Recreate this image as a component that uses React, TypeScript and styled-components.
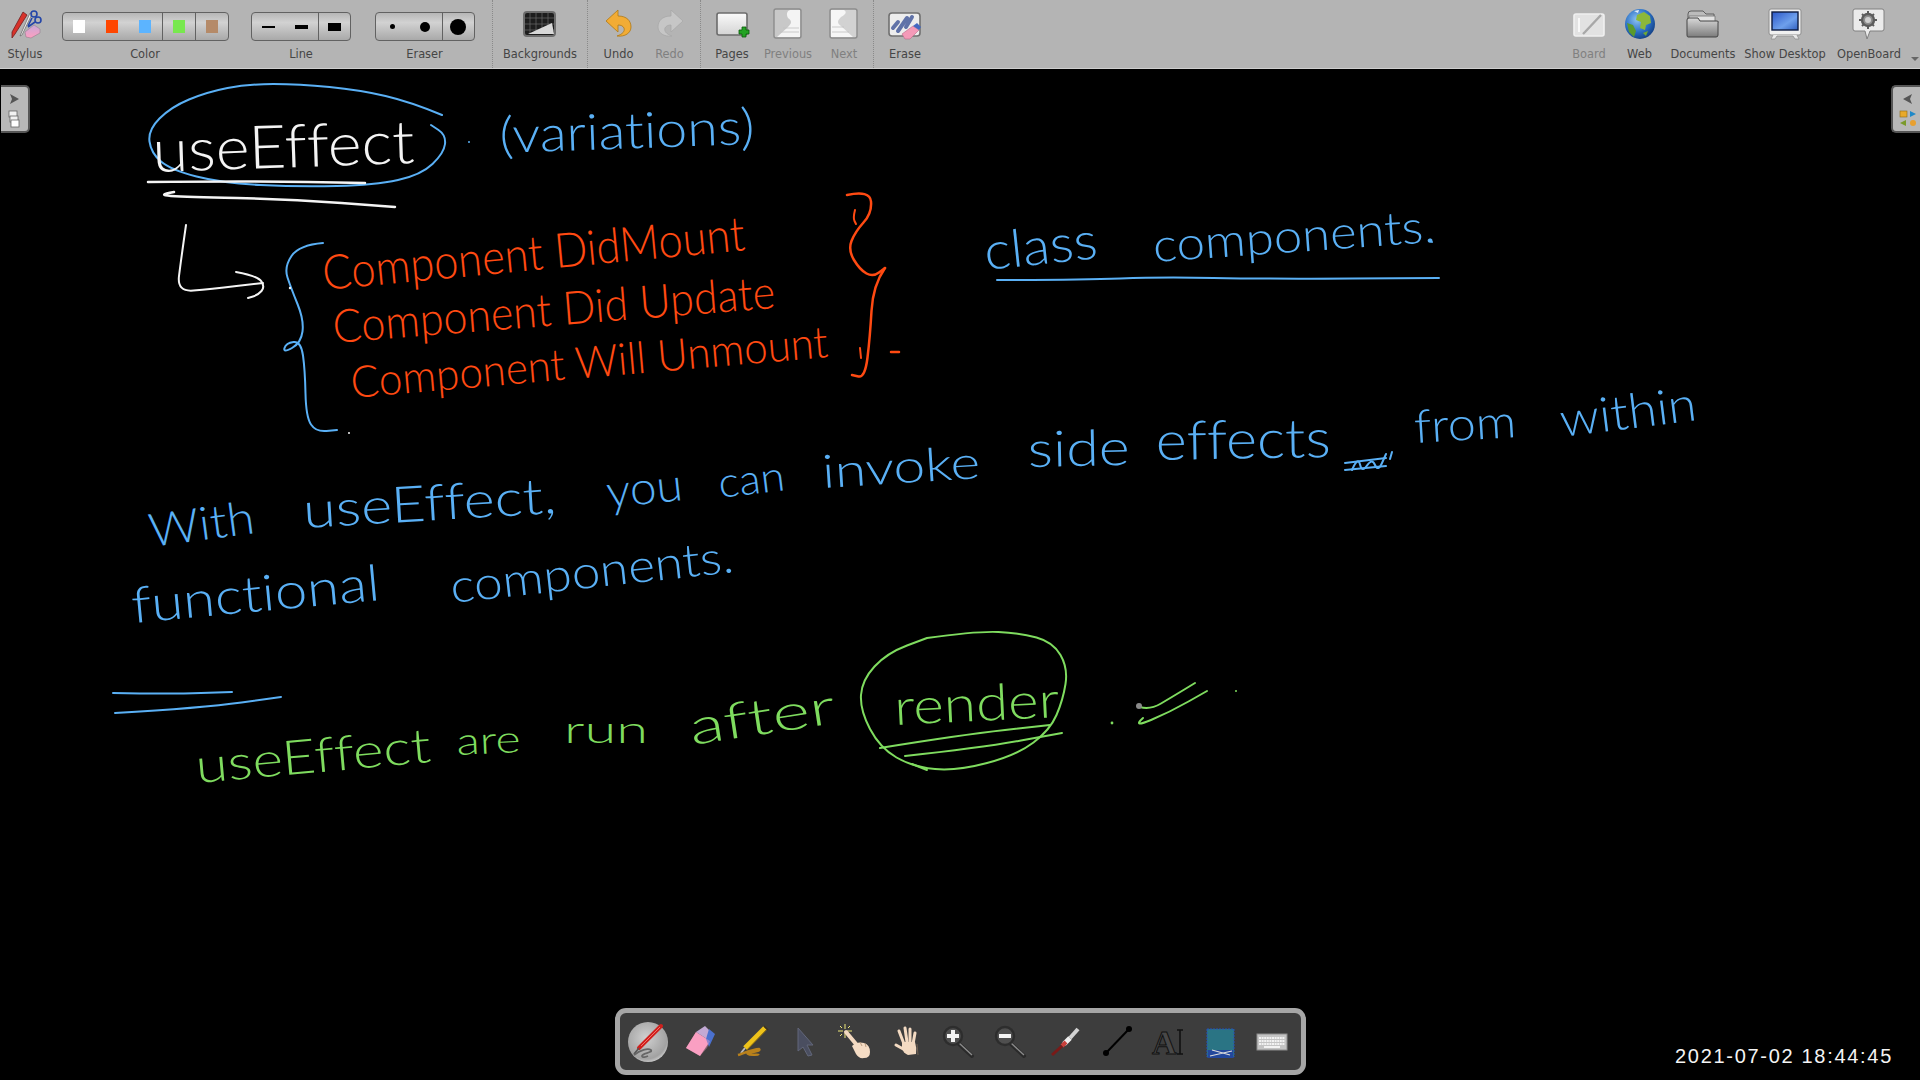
import React from "react"
import styled, { createGlobalStyle } from "styled-components"

const Colors = {
  bar: "#b4b4b4",
  label: "#454545",
  labelOff: "#808080",
  blue: "#5ab0f5",
  orange: "#ff4a12",
  green: "#7fdc5f",
  white: "#f4f4f4",
}

const GlobalStyle = createGlobalStyle`
  html, body {
    margin: 0;
    padding: 0;
    background: #000;
  }
  #root {
    width: 1920px;
    height: 1080px;
    overflow: hidden;
  }
`

const Page = styled.div`
  display: flex;
  flex-direction: column;
  width: 1920px;
  height: 1080px;
  background: #000;
  font-family: "DejaVu Sans", sans-serif;
`

const Toolbar = styled.header`
  display: flex;
  flex: none;
  height: 68px;
  background: ${Colors.bar};
  border-bottom: 1px solid #cfcfcf;
`

const ToolItem = styled.div<{ $width: number }>`
  display: flex;
  flex: none;
  flex-direction: column;
  align-items: center;
  width: ${p => p.$width}px;
`

const IconSlot = styled.div`
  display: flex;
  align-items: center;
  justify-content: center;
  height: 46px;
`

const ToolLabel = styled.span<{ $off?: boolean }>`
  font-size: 11.4px;
  line-height: 16px;
  white-space: nowrap;
  color: ${p => (p.$off ? Colors.labelOff : Colors.label)};
`

const DottedSep = styled.div<{ $before?: number }>`
  flex: none;
  width: 0;
  margin-left: ${p => p.$before || 0}px;
  border-left: 1px dotted #8a8a8a;
`

const Section = styled.div<{ $width: number; $left?: number }>`
  display: flex;
  flex: none;
  width: ${p => p.$width}px;
  padding-left: ${p => p.$left || 0}px;
  box-sizing: border-box;
`

const Spacer = styled.div`
  flex: 1;
`

const MenuArrow = styled.div`
  flex: none;
  align-self: flex-end;
  width: 0;
  height: 0;
  margin: 0 1px 7px 2px;
  border-left: 4px solid transparent;
  border-right: 4px solid transparent;
  border-top: 4px solid #666;
`

const SegmentGroup = styled.div`
  display: flex;
  height: 29px;
  margin-top: 7px;
  border: 1px solid #626262;
  border-radius: 4px;
  box-sizing: border-box;
  background: linear-gradient(#b6b6b6 0%, #d2d2d2 35%, #bcbcbc 70%, #a9a9a9 100%);
`

const Segment = styled.div<{ $width: number; $divided?: boolean }>`
  display: flex;
  align-items: center;
  justify-content: center;
  width: ${p => p.$width}px;
  box-sizing: border-box;
  border-left: ${p => (p.$divided ? "1px solid #626262" : "none")};
`

const Swatch = styled.div<{ $color: string }>`
  width: 12px;
  height: 13px;
  background: ${p => p.$color};
`

const LineSample = styled.div<{ $height: number }>`
  width: 13px;
  height: ${p => p.$height}px;
  background: #000;
`

const EraserDot = styled.div<{ $size: number; $tall?: number }>`
  width: ${p => p.$size}px;
  height: ${p => p.$tall || p.$size}px;
  border-radius: 50%;
  background: #000;
`

const Board = styled.main`
  position: relative;
  flex: 1;
`

const InkLayer = styled.svg`
  position: absolute;
  inset: 0;
  width: 1920px;
  height: 1011px;
`

const InkStroke = styled.path<{ $color: string; $weight?: number }>`
  fill: none;
  stroke: ${p => p.$color};
  stroke-width: ${p => p.$weight || 2};
  stroke-linecap: round;
  stroke-linejoin: round;
`

const InkWord = styled.text<{ $color: string }>`
  font-family: "Lato", "Open Sans", sans-serif;
  font-weight: 300;
  font-variant-ligatures: none;
  fill: ${p => p.$color};
`

const SideTab = styled.div<{ $side: "left" | "right" }>`
  position: absolute;
  top: 16px;
  ${p => p.$side}: ${p => (p.$side === "left" ? 1 : 0)}px;
  display: flex;
  align-items: center;
  justify-content: center;
  width: 29px;
  height: 48px;
  box-sizing: border-box;
  background: #b8b8b8;
  border: 2px solid #565656;
  border-${p => p.$side}: none;
  border-radius: ${p => (p.$side === "left" ? "0 5px 5px 0" : "5px 0 0 5px")};
`

const Dock = styled.nav`
  position: absolute;
  left: 615px;
  bottom: 5px;
  display: flex;
  align-items: center;
  width: 691px;
  height: 67px;
  padding-left: 2px;
  box-sizing: border-box;
  background: #3d3d3d;
  border: 5px solid #a6a6a6;
  border-radius: 11px;
`

const DockButton = styled.div`
  display: flex;
  flex: none;
  align-items: center;
  justify-content: center;
  width: 52px;
`

const Timestamp = styled.time`
  position: absolute;
  right: 27px;
  bottom: 13px;
  font-family: "Liberation Sans", sans-serif;
  font-size: 20px;
  line-height: 22px;
  letter-spacing: 1.7px;
  white-space: pre;
  color: #f4f4f4;
`

type Pt = [number, number]

// midpoint smoothing, keeps the hand drawn look without a lot of control points
const smooth = (pts: Pt[]) => {
  let d = `M${pts[0][0]} ${pts[0][1]}`
  for (let i = 1; i < pts.length - 1; i++) {
    const mx = (pts[i][0] + pts[i + 1][0]) / 2
    const my = (pts[i][1] + pts[i + 1][1]) / 2
    d += ` Q${pts[i][0]} ${pts[i][1]} ${mx} ${my}`
  }
  const last = pts[pts.length - 1]
  return `${d} L${last[0]} ${last[1]}`
}

type Word = { text: string; from: Pt; to: Pt; size: number; color: string }

const words: Word[] = [
  { text: "useEffect", from: [153, 172], to: [415, 163], size: 60, color: Colors.white },
  { text: "(variations)", from: [500, 153], to: [755, 144], size: 50, color: Colors.blue },
  { text: "Component DidMount", from: [324, 290], to: [746, 250], size: 48, color: Colors.orange },
  { text: "Component Did Update", from: [334, 343], to: [776, 308], size: 46, color: Colors.orange },
  { text: "Component Will Unmount", from: [352, 398], to: [829, 357], size: 44, color: Colors.orange },
  { text: "class", from: [986, 270], to: [1099, 258], size: 52, color: Colors.blue },
  { text: "components.", from: [1154, 262], to: [1436, 242], size: 46, color: Colors.blue },
  { text: "With", from: [151, 547], to: [256, 533], size: 46, color: Colors.blue },
  { text: "useEffect,", from: [304, 528], to: [557, 513], size: 50, color: Colors.blue },
  { text: "you", from: [608, 508], to: [684, 500], size: 46, color: Colors.blue },
  { text: "can", from: [720, 498], to: [786, 490], size: 42, color: Colors.blue },
  { text: "invoke", from: [823, 488], to: [981, 478], size: 46, color: Colors.blue },
  { text: "side", from: [1028, 467], to: [1130, 465], size: 50, color: Colors.blue },
  { text: "effects", from: [1156, 460], to: [1331, 457], size: 54, color: Colors.blue },
  { text: "from", from: [1415, 443], to: [1517, 437], size: 46, color: Colors.blue },
  { text: "within", from: [1562, 437], to: [1698, 420], size: 48, color: Colors.blue },
  { text: "functional", from: [133, 623], to: [381, 600], size: 50, color: Colors.blue },
  { text: "components.", from: [452, 603], to: [735, 572], size: 46, color: Colors.blue },
  { text: "useEffect", from: [197, 783], to: [432, 762], size: 48, color: Colors.green },
  { text: "are", from: [457, 755], to: [521, 752], size: 38, color: Colors.green },
  { text: "run", from: [564, 743], to: [648, 743], size: 38, color: Colors.green },
  { text: "after", from: [692, 745], to: [837, 723], size: 50, color: Colors.green },
  { text: "render", from: [895, 725], to: [1060, 717], size: 50, color: Colors.green },
]

const strokes: { color: string; weight?: number; pts: Pt[] }[] = [
  // circle and underlines round the title
  { color: Colors.blue, pts: [[442, 115], [411, 102], [360, 90], [299, 84], [248, 84], [207, 92], [171, 107], [148, 130], [151, 153], [171, 170], [222, 183], [299, 187], [375, 185], [421, 175], [444, 153], [446, 135], [431, 125]] },
  { color: Colors.white, weight: 2.5, pts: [[148, 182], [250, 181], [365, 183]] },
  { color: Colors.white, weight: 2.5, pts: [[174, 192], [156, 195], [186, 197], [288, 199], [395, 207]] },
  // arrow
  { color: Colors.white, pts: [[186, 225], [181, 260], [177, 292], [210, 289], [263, 283]] },
  { color: Colors.white, pts: [[236, 272], [258, 276], [265, 287], [258, 295], [248, 298]] },
  // braces
  { color: Colors.blue, pts: [[323, 243], [299, 245], [284, 267], [291, 288], [304, 320], [301, 343], [283, 353], [286, 343], [301, 341], [305, 370], [306, 417], [316, 432], [337, 430]] },
  { color: Colors.orange, weight: 2.5, pts: [[847, 195], [870, 190], [872, 213], [855, 232], [848, 250], [860, 270], [873, 277], [885, 268]] },
  { color: Colors.orange, weight: 2.5, pts: [[885, 268], [873, 285], [870, 337], [865, 378], [852, 375]] },
  { color: Colors.orange, pts: [[855, 210], [853, 218], [856, 224]] },
  { color: Colors.orange, weight: 2.5, pts: [[891, 352], [899, 352]] },
  { color: Colors.orange, pts: [[860, 348], [861, 358]] },
  // under "class components"
  { color: Colors.blue, pts: [[997, 280], [1080, 280], [1161, 277], [1266, 279], [1439, 278]] },
  // crossed out word
  { color: Colors.blue, pts: [[1345, 463], [1386, 458]] },
  { color: Colors.blue, pts: [[1352, 470], [1358, 456], [1362, 473], [1372, 458], [1378, 472], [1386, 454]] },
  { color: Colors.blue, pts: [[1345, 470], [1386, 466]] },
  { color: Colors.blue, pts: [[1392, 452], [1390, 459]] },
  // double rule between the paragraphs
  { color: Colors.blue, pts: [[113, 693], [170, 694], [232, 692]] },
  { color: Colors.blue, pts: [[115, 713], [202, 708], [281, 697]] },
  // green circle, underlines, tick
  { color: Colors.green, pts: [[927, 638], [977, 631], [1020, 633], [1053, 642], [1068, 668], [1063, 700], [1050, 730], [1017, 755], [957, 771], [913, 767], [880, 748], [860, 710], [862, 680], [887, 653], [927, 638]] },
  { color: Colors.green, pts: [[880, 748], [960, 735], [1050, 725]] },
  { color: Colors.green, pts: [[905, 756], [980, 748], [1062, 733]] },
  { color: Colors.green, pts: [[912, 764], [927, 770]] },
  { color: Colors.green, pts: [[1140, 707], [1150, 710], [1172, 697], [1195, 683]] },
  { color: Colors.green, pts: [[1143, 718], [1132, 728], [1170, 712], [1207, 691]] },
]

const dots: { x: number; y: number; color: string; r?: number }[] = [
  { x: 469, y: 142, color: Colors.blue, r: 1 },
  { x: 349, y: 433, color: Colors.white, r: 1 },
  { x: 290, y: 288, color: Colors.white, r: 1.2 },
  { x: 1432, y: 242, color: Colors.blue, r: 1 },
  { x: 1112, y: 723, color: Colors.green, r: 1.4 },
  { x: 1236, y: 691, color: Colors.green, r: 1 },
  { x: 1139, y: 706, color: "#8a8a8a", r: 3 },
]

const InkBoard = () => (
  <InkLayer viewBox="0 69 1920 1011">
    {strokes.map((s, i) => (
      <InkStroke key={i} d={smooth(s.pts)} $color={s.color} $weight={s.weight} />
    ))}
    {dots.map((d, i) => (
      <circle key={i} cx={d.x} cy={d.y} r={d.r || 1} fill={d.color} />
    ))}
    {words.map(w => {
      const dx = w.to[0] - w.from[0]
      const dy = w.to[1] - w.from[1]
      const angle = (Math.atan2(dy, dx) * 180) / Math.PI
      return (
        <InkWord
          key={w.text + w.from[0]}
          x={w.from[0]}
          y={w.from[1]}
          fontSize={w.size}
          textLength={Math.hypot(dx, dy)}
          lengthAdjust="spacingAndGlyphs"
          transform={`rotate(${angle} ${w.from[0]} ${w.from[1]})`}
          $color={w.color}
        >
          {w.text}
        </InkWord>
      )
    })}
  </InkLayer>
)

const Ico = ({ children }: { children: React.ReactNode }) => (
  <svg width="44" height="44" viewBox="0 0 44 44">
    {children}
  </svg>
)

const DockIco = ({ children }: { children: React.ReactNode }) => (
  <svg width="48" height="48" viewBox="0 0 48 48">
    {children}
  </svg>
)

const Defs = () => (
  <svg width="0" height="0" style={{ position: "absolute" }}>
    <defs>
      <radialGradient id="globe" cx="0.4" cy="0.35" r="0.7">
        <stop offset="0" stopColor="#8fc4f2" />
        <stop offset="0.6" stopColor="#2a6fc4" />
        <stop offset="1" stopColor="#123d80" />
      </radialGradient>
      <linearGradient id="paper" x1="0" y1="0" x2="0" y2="1">
        <stop offset="0" stopColor="#fafafa" />
        <stop offset="1" stopColor="#d4d4d4" />
      </linearGradient>
      <linearGradient id="folder" x1="0" y1="0" x2="0" y2="1">
        <stop offset="0" stopColor="#d8d8d8" />
        <stop offset="1" stopColor="#7c7c7c" />
      </linearGradient>
      <linearGradient id="screen" x1="0" y1="0" x2="1" y2="1">
        <stop offset="0" stopColor="#2a56c8" />
        <stop offset="0.6" stopColor="#6ea0ec" />
        <stop offset="1" stopColor="#2f5fc0" />
      </linearGradient>
      <linearGradient id="pinkEraser" x1="0" y1="0" x2="0" y2="1">
        <stop offset="0" stopColor="#c6a8d8" />
        <stop offset="1" stopColor="#ff9fc0" />
      </linearGradient>
      <radialGradient id="penDisc" cx="0.45" cy="0.4" r="0.7">
        <stop offset="0" stopColor="#d0d0d0" />
        <stop offset="0.75" stopColor="#a2a2a2" />
        <stop offset="1" stopColor="#eeeeee" />
      </radialGradient>
    </defs>
  </svg>
)

const StylusIcon = () => (
  <Ico>
    <path d="M20 11 L24 14 L12 33 L9 37 L9 31 Z" fill="#d8322a" stroke="#6e2020" strokeWidth="0.8" />
    <path d="M27 12 L29 13 L19 34 L17 35 Z" fill="#f0f0f0" stroke="#555" strokeWidth="0.6" />
    <circle cx="31" cy="13" r="3" fill="none" stroke="#2446a8" strokeWidth="1.6" />
    <circle cx="35" cy="19" r="3" fill="none" stroke="#2446a8" strokeWidth="1.6" />
    <path d="M29 17 L25 25 M32 21 L25 26" stroke="#2446a8" strokeWidth="1.6" />
    <path d="M22 31 L31 24 L37 28 L37 32 L28 37 L23 36 Z" fill="url(#pinkEraser)" stroke="#8c7488" strokeWidth="0.5" />
  </Ico>
)

const BackgroundsIcon = () => (
  <Ico>
    <rect x="6" y="11" width="31" height="24" rx="3" fill="#1d1d1d" stroke="#6e6e6e" strokeWidth="2" />
    <path d="M12 12 V33 M18 12 V33 M24 12 V33 M30 12 V33 M7 17 H36 M7 23 H36 M7 29 H36" stroke="#6a6a6a" strokeWidth="0.7" />
    <path d="M10 33 L34 22 L36 33 Z" fill="#d8d8d8" />
  </Ico>
)

const arrowPath = "M9 20 L21 9 L21 15 C30 15 34 20 34 26 C34 32 28 36 20 35 C26 33 28 30 27 27 C26 25 24 24 21 24 L21 31 Z"

const UndoIcon = () => (
  <Ico>
    <path d={arrowPath} fill="#f2ac35" stroke="#b07814" strokeWidth="0.8" />
  </Ico>
)

const RedoIcon = () => (
  <Ico>
    <g transform="matrix(-1 0 0 1 44 0)">
      <path d={arrowPath} fill="#c6c6c6" stroke="#a8a8a8" strokeWidth="0.8" />
    </g>
  </Ico>
)

const PagesIcon = () => (
  <Ico>
    <rect x="7" y="12" width="30" height="22" rx="2" fill="url(#paper)" stroke="#6c6c6c" strokeWidth="1.6" />
    <path d="M29 29 H32 V26 H36 V29 H39 V33 H36 V36 H32 V33 H29 Z" fill="#23a323" stroke="#0a5a0a" strokeWidth="0.8" />
  </Ico>
)

const PrevIcon = () => (
  <Ico>
    <rect x="8" y="8" width="27" height="29" rx="2" fill="#c8c8c8" stroke="#8c8c8c" strokeWidth="1.4" />
    <path d="M24 9 H34 V36 H11 L22 26 C26 22 26 20 22 17 C20 13 21 10 24 9 Z" fill="#f4f4f4" />
    <path d="M17 27 H33 M14 31 H33" stroke="#c0c0c0" strokeWidth="0.8" />
  </Ico>
)

const NextIcon = () => (
  <Ico>
    <rect x="8" y="8" width="27" height="29" rx="2" fill="#d2d2d2" stroke="#8c8c8c" strokeWidth="1.4" />
    <path d="M9 9 H22 C25 11 24 13 19 16 C15 20 15 22 19 25 L31 36 H9 Z" fill="#f6f6f6" />
    <path d="M10 26 H22 M10 31 H27" stroke="#c0c0c0" strokeWidth="0.8" />
  </Ico>
)

const EraseIcon = () => (
  <Ico>
    <rect x="6" y="12" width="31" height="23" rx="3" fill="#ededed" stroke="#707070" strokeWidth="1.6" />
    <path d="M10 27 L15 21 M15 30 L24 17 M23 26 L29 16" stroke="#6072a8" strokeWidth="4" strokeLinecap="round" />
    <path d="M19 33 L30 25 L36 29 L27 38 L22 38 Z" fill="#f49ab8" stroke="#b86a88" strokeWidth="0.6" />
    <path d="M30 25 L34 22 L38 26 L36 29 Z" fill="#4468c0" />
  </Ico>
)

const BoardIcon = () => (
  <Ico>
    <rect x="7" y="13" width="30" height="22" rx="2" fill="#e2e2e2" stroke="#f0f0f0" strokeWidth="1.6" />
    <rect x="11" y="17" width="2" height="14" fill="#f8f8f8" />
    <path d="M34 14 L18 31 L16 33" stroke="#a8a8a8" strokeWidth="2.4" />
  </Ico>
)

const WebIcon = () => (
  <Ico>
    <circle cx="22" cy="23" r="15" fill="url(#globe)" />
    <path d="M19 14 L26 11 L32 15 L33 22 L28 24 L27 29 L22 27 L23 21 L18 19 Z" fill="#8cb83a" />
    <path d="M9 22 L15 24 L18 30 L16 36 L11 31 Z" fill="#5a9a2c" />
    <path d="M25 32 L30 30 L28 35 Z" fill="#6ea834" />
    <path d="M16 10 L21 9 L20 12 Z" fill="#e4eef8" />
  </Ico>
)

const DocumentsIcon = () => (
  <Ico>
    <path d="M7 13 Q7 10 10 10 H22 L25 13 H33 V30 H7 Z" fill="#bcbcbc" stroke="#5e5e5e" strokeWidth="1" />
    <path d="M8 15 H34 V32 H8 Z" fill="#e2e2e2" stroke="#6e6e6e" strokeWidth="0.8" />
    <path d="M7 36 Q6 36 6 34 V19 Q6 17 8 17 H17 L19 20 H36 Q38 20 37 22 V34 Q37 36 35 36 Z" fill="url(#folder)" stroke="#444" strokeWidth="1" />
  </Ico>
)

const ShowDesktopIcon = () => (
  <Ico>
    <rect x="6" y="8" width="32" height="26" rx="2" fill="#f0f0f0" stroke="#8e8e8e" strokeWidth="1" />
    <rect x="9" y="11" width="26" height="18" fill="url(#screen)" stroke="#0d1c40" strokeWidth="1.4" />
    <path d="M10 34 L8 38 H12 L14 35 H30 L32 38 H36 L34 34" fill="#e8e8e8" stroke="#8e8e8e" strokeWidth="0.8" />
  </Ico>
)

const OpenBoardIcon = () => (
  <Ico>
    <path d="M8 8 H35 Q37 8 37 10 V28 Q37 30 35 30 H23 L20 38 L18 30 H8 Q6 30 6 28 V10 Q6 8 8 8 Z" fill="#ebebeb" stroke="#808080" strokeWidth="1" />
    <circle cx="21" cy="19" r="6" fill="#8e8e8e" stroke="#5c5c5c" strokeWidth="2.4" />
    <path d="M21 10 V28 M12 19 H30 M15 13 L27 25 M27 13 L15 25" stroke="#5c5c5c" strokeWidth="2" strokeDasharray="3 12" />
    <circle cx="21" cy="19" r="3" fill="#d0d0d0" />
  </Ico>
)

const PenDockIcon = () => (
  <DockIco>
    <ellipse cx="24" cy="24" rx="20" ry="20" fill="url(#penDisc)" />
    <path d="M37 8 L15 30" stroke="#d01f1c" strokeWidth="4" strokeLinecap="round" />
    <path d="M36 9 L17 28" stroke="#f0706a" strokeWidth="1" />
    <path d="M15 30 L10 36" stroke="#555" strokeWidth="1.6" />
    <path d="M10 37 C16 32 24 30 27 32 C29 35 18 35 18 38 C18 40 22 39 24 38" fill="none" stroke="#666" strokeWidth="1.8" />
  </DockIco>
)

const EraserDockIcon = () => (
  <DockIco>
    <path d="M10 30 L20 14 L34 23 L24 38 Z" fill="#fb9fc2" />
    <path d="M20 14 L29 8 L34 13 L34 23 Z" fill="#c3a9d4" />
    <path d="M33 11 L39 16 L33 29 L30 21 Z" fill="#4b71cf" />
    <path d="M10 30 L24 38 L31 30 L34 23 L20 14 Z" fill="#fb9fc2" opacity="0.4" />
  </DockIco>
)

const HighlighterIcon = () => (
  <DockIco>
    <path d="M37 10 L17 30" stroke="#edc21a" strokeWidth="5" />
    <path d="M39 11 L19 32" stroke="#8c6d10" strokeWidth="1" />
    <path d="M36 8 L40 12" stroke="#3b3320" strokeWidth="1.6" />
    <path d="M17 30 L13 35" stroke="#bbb" strokeWidth="2" />
    <path d="M10 37 C16 35 26 31 31 31 C34 33 23 34 20 36 C22 38 30 36 31 37" fill="none" stroke="#b9811b" strokeWidth="2.4" />
  </DockIco>
)

const CursorIcon = () => (
  <DockIco>
    <path d="M18 10 L33 27 L27 27 L32 37 L28 38 L23 29 L18 33 Z" fill="#4a4e60" stroke="#62677a" strokeWidth="1" />
  </DockIco>
)

const PointerIcon = () => (
  <DockIco>
    <path d="M13 6 V11 M13 15 V20 M6 13 H11 M15 13 H20 M8 8 L10 10 M18 8 L16 10 M8 18 L10 16 M18 18 L16 16" stroke="#efe87a" strokeWidth="1" />
    <path d="M14 14 L24 26" stroke="#f3d9c0" strokeWidth="4" strokeLinecap="round" />
    <path d="M20 28 Q25 23 32 25 Q38 27 38 34 Q38 40 32 40 Q27 41 24 36 Z" fill="#f5dcc4" />
    <path d="M28 24 L30 28 M33 25 L34 29" stroke="#a88a6c" strokeWidth="0.8" />
  </DockIco>
)

const HandIcon = () => (
  <DockIco>
    <g stroke="#f3dac2" strokeWidth="3" strokeLinecap="round">
      <path d="M20 26 L15 13" />
      <path d="M23 24 L21 10" />
      <path d="M26 24 L26 11" />
      <path d="M29 26 L31 15" />
      <path d="M21 32 L12 27" />
    </g>
    <path d="M18 24 H31 Q33 30 32 36 L24 37 Q19 35 18 30 Z" fill="#f3dac2" />
    <path d="M33 26 L34 37" stroke="#7c6a58" strokeWidth="0.8" />
  </DockIco>
)

const ZoomIcon = ({ plus }: { plus?: boolean }) => (
  <DockIco>
    <path d="M22 25 L36 38" stroke="#2a2a2a" strokeWidth="4" strokeLinecap="round" />
    <path d="M23 25 L36 37" stroke="#8b8b8b" strokeWidth="1.4" />
    <circle cx="17" cy="18" r="9" fill="#4f4f4f" stroke="#2d2d2d" strokeWidth="2.4" />
    <path d={plus ? "M15 12 H19 V16 H23 V20 H19 V24 H15 V20 H11 V16 H15 Z" : "M11 16 H23 V20 H11 Z"} fill="#f5f5f5" />
  </DockIco>
)

const LaserIcon = () => (
  <DockIco>
    <path d="M38 11 L30 20" stroke="#d2d2d2" strokeWidth="4" />
    <path d="M30 20 L24 26" stroke="#efefef" strokeWidth="5" />
    <path d="M26 24 L22 28" stroke="#c8403c" strokeWidth="4" />
    <path d="M22 28 L12 37" stroke="#7a1a18" strokeWidth="3" />
  </DockIco>
)

const LineIcon = () => (
  <DockIco>
    <path d="M37 11 L14 35" stroke="#000" strokeWidth="2" />
    <circle cx="37" cy="11" r="3" fill="#000" />
    <circle cx="14" cy="35" r="3" fill="#000" />
  </DockIco>
)

const TextIcon = () => (
  <DockIco>
    <text x="8" y="36" fontFamily="Liberation Serif, serif" fontWeight="700" fontSize="34" fill="#484848" stroke="#111" strokeWidth="1">
      A
    </text>
    <path d="M33 12 H39 M36 12 V36 M33 36 H39" stroke="#111" strokeWidth="1.6" fill="none" />
  </DockIco>
)

const CaptureIcon = () => (
  <DockIco>
    <rect x="11" y="11" width="27" height="28" fill="#2a7484" stroke="#2550b8" strokeWidth="1" strokeDasharray="2 1" />
    <rect x="12" y="32" width="25" height="8" fill="#23479c" />
    <path d="M14 38 L36 33 M16 32 L34 37" stroke="#dcdcdc" strokeWidth="1.2" />
  </DockIco>
)

const KeyboardIcon = () => (
  <DockIco>
    <rect x="9" y="16" width="30" height="16" fill="#c4c4c4" stroke="#8d8d8d" strokeWidth="1" />
    <path d="M11 20 H37 M11 23 H37 M11 26 H37" stroke="#f2f2f2" strokeWidth="2" strokeDasharray="2 0.6" />
    <path d="M16 29 H32" stroke="#f2f2f2" strokeWidth="2" />
  </DockIco>
)

const Tool = ({ width, label, off, children }: { width: number; label: string; off?: boolean; children: React.ReactNode }) => (
  <ToolItem $width={width}>
    <IconSlot>{children}</IconSlot>
    <ToolLabel $off={off}>{label}</ToolLabel>
  </ToolItem>
)

const swatches = ["#ffffff", "#ff4600", "#5cb4ff", "#78e84e", "#b58a68"]

const dockIcons = [
  <PenDockIcon />,
  <EraserDockIcon />,
  <HighlighterIcon />,
  <CursorIcon />,
  <PointerIcon />,
  <HandIcon />,
  <ZoomIcon plus />,
  <ZoomIcon />,
  <LaserIcon />,
  <LineIcon />,
  <TextIcon />,
  <CaptureIcon />,
  <KeyboardIcon />,
]

export default function App() {
  return (
    <Page>
      <GlobalStyle />
      <Defs />
      <Toolbar>
        <Tool width={50} label="Stylus">
          <StylusIcon />
        </Tool>
        <Tool width={190} label="Color">
          <SegmentGroup>
            {swatches.map((c, i) => (
              <Segment key={c} $width={33} $divided={i > 2}>
                <Swatch $color={c} />
              </Segment>
            ))}
          </SegmentGroup>
        </Tool>
        <Tool width={122} label="Line">
          <SegmentGroup>
            <Segment $width={33}>
              <LineSample $height={2} />
            </Segment>
            <Segment $width={33}>
              <LineSample $height={4} />
            </Segment>
            <Segment $width={32} $divided>
              <LineSample $height={8} />
            </Segment>
          </SegmentGroup>
        </Tool>
        <Tool width={125} label="Eraser">
          <SegmentGroup>
            <Segment $width={33}>
              <EraserDot $size={5} />
            </Segment>
            <Segment $width={33}>
              <EraserDot $size={10} />
            </Segment>
            <Segment $width={32} $divided>
              <EraserDot $size={16} $tall={16} />
            </Segment>
          </SegmentGroup>
        </Tool>
        <DottedSep $before={5} />
        <Tool width={94} label="Backgrounds">
          <BackgroundsIcon />
        </Tool>
        <DottedSep />
        <Section $width={112} $left={5}>
          <Tool width={51} label="Undo">
            <UndoIcon />
          </Tool>
          <Tool width={51} label="Redo" off>
            <RedoIcon />
          </Tool>
        </Section>
        <DottedSep />
        <Section $width={172} $left={3}>
          <Tool width={56} label="Pages">
            <PagesIcon />
          </Tool>
          <Tool width={56} label="Previous" off>
            <PrevIcon />
          </Tool>
          <Tool width={56} label="Next" off>
            <NextIcon />
          </Tool>
        </Section>
        <DottedSep />
        <Tool width={62} label="Erase">
          <EraseIcon />
        </Tool>
        <Spacer />
        <Tool width={50} label="Board" off>
          <BoardIcon />
        </Tool>
        <Tool width={51} label="Web">
          <WebIcon />
        </Tool>
        <Tool width={76} label="Documents">
          <DocumentsIcon />
        </Tool>
        <Tool width={88} label="Show Desktop">
          <ShowDesktopIcon />
        </Tool>
        <Tool width={80} label="OpenBoard">
          <OpenBoardIcon />
        </Tool>
        <MenuArrow />
      </Toolbar>
      <Board>
        <InkBoard />
        <SideTab $side="left">
          <svg width="22" height="40" viewBox="0 0 22 40">
            <path d="M6 5 L15 10 L6 15 L8 10 Z" fill="#555" />
            <rect x="5" y="22" width="8" height="6" fill="#f2f2f2" stroke="#666" strokeWidth="0.8" />
            <rect x="6" y="27" width="8" height="6" fill="#f2f2f2" stroke="#666" strokeWidth="0.8" />
            <rect x="7" y="31" width="8" height="7" fill="#fff" stroke="#666" strokeWidth="0.8" />
          </svg>
        </SideTab>
        <SideTab $side="right">
          <svg width="24" height="40" viewBox="0 0 24 40">
            <path d="M17 5 L8 10 L17 15 L15 10 Z" fill="#555" />
            <rect x="5" y="22" width="7" height="6" fill="#e8a92a" stroke="#8e6a14" strokeWidth="0.6" />
            <path d="M15 22 L21 25 L15 28 Z" fill="#1e88c8" />
            <path d="M11 31 L5 34 L11 37 Z" fill="#7a9a2a" />
            <circle cx="18" cy="34" r="3" fill="#e8a030" />
          </svg>
        </SideTab>
        <Dock>
          {dockIcons.map((icon, i) => (
            <DockButton key={i}>{icon}</DockButton>
          ))}
        </Dock>
        <Timestamp>2021-07-02 18:44:45</Timestamp>
      </Board>
    </Page>
  )
}
